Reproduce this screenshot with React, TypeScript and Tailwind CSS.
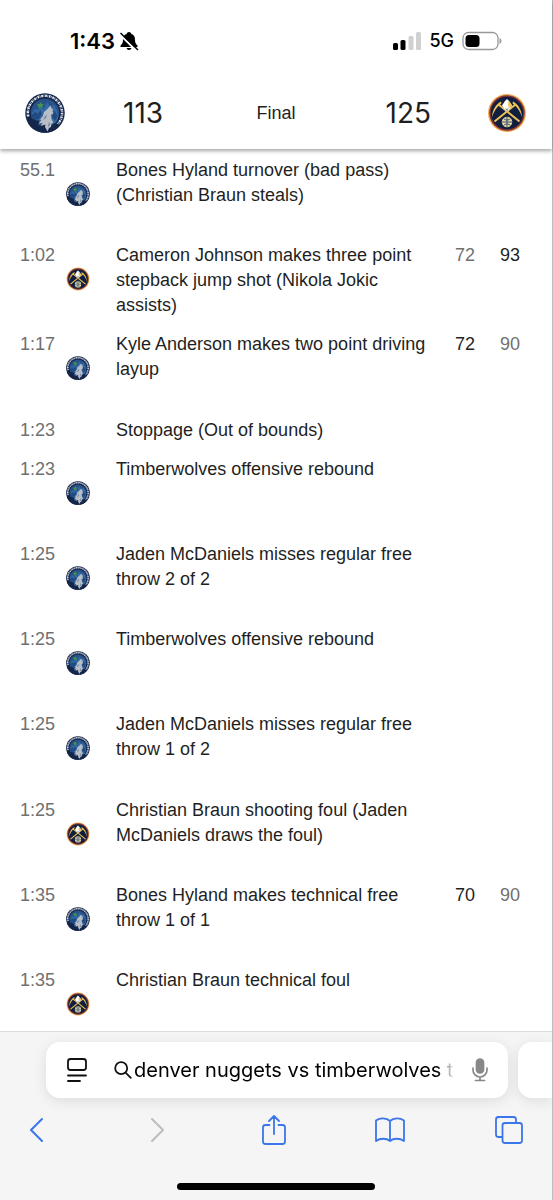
type Team = 'min' | 'den';

type Play = {
  time: string;
  text: string;
  team?: Team;
  score?: [number, number];
};

const plays: Play[] = [
  { time: '55.1', team: 'min', text: 'Bones Hyland turnover (bad pass) (Christian Braun steals)' },
  { time: '1:02', team: 'den', text: 'Cameron Johnson makes three point stepback jump shot (Nikola Jokic assists)', score: [72, 93] },
  { time: '1:17', team: 'min', text: 'Kyle Anderson makes two point driving layup', score: [72, 90] },
  { time: '1:23', text: 'Stoppage (Out of bounds)' },
  { time: '1:23', team: 'min', text: 'Timberwolves offensive rebound' },
  { time: '1:25', team: 'min', text: 'Jaden McDaniels misses regular free throw 2 of 2' },
  { time: '1:25', team: 'min', text: 'Timberwolves offensive rebound' },
  { time: '1:25', team: 'min', text: 'Jaden McDaniels misses regular free throw 1 of 2' },
  { time: '1:25', team: 'den', text: 'Christian Braun shooting foul (Jaden McDaniels draws the foul)' },
  { time: '1:35', team: 'min', text: 'Bones Hyland makes technical free throw 1 of 1', score: [70, 90] },
  { time: '1:35', team: 'den', text: 'Christian Braun technical foul' },
];

const WolvesLogo = ({ className }: { className: string }) => (
  <svg viewBox="0 0 80 80" className={className} role="img" aria-label="Minnesota Timberwolves">
    <circle cx="40" cy="40" r="39.500" fill="#14264a" />
    {/* lettering band, read as ticks at this size */}
    <path d="M6.500 47A34.200 34.200 0 1 1 64 64" fill="none" stroke="#dfe3ea" strokeWidth="5" strokeDasharray="3.400 1.200 1.400 1.600" />
    <circle cx="40" cy="40" r="28.500" fill="#28538a" />
    <path d="M14 40l7-9 4 4 7-10 5 8 7-15 7 10 7-5 6 12 2 14-4 10H16z" fill="#336aa6" />
    <path d="M13 44l8-7 4 5 6-8 3 8-6 10-13 3zM58 34l7 12-5 10-6-8z" fill="#234a80" />
    <path d="M3 49c10-1 14 7 26 6l-3 10 14-1 6 15C24 82 5 69 3 49z" fill="#14264a" />
    <path d="M46 79l8-14 8-5 8 4c-6 9-14 14-24 15z" fill="#14264a" />
    <path d="M51 25l2 6 3 1-1 5 2 3-5 4 1 8 4 8-4 1-1 7-4 2-3 7-5-9 1-5-10 3 4-6-8 1 6-7-3-1 6-7 2-8 7-6z" fill="#b9bdc5" />
    <path d="M40 47l4-4-2 7-6 4zM48 57l2 7-4 4z" fill="#6d7f9b" />
    <path d="M31 18l2 4 5 0-4 4 2 4-5-2-5 3 1-5-4-3 6-1z" fill="#479448" />
  </svg>
);

const NuggetsLogo = ({ className }: { className: string }) => (
  <svg viewBox="0 0 80 80" className={className} role="img" aria-label="Denver Nuggets">
    <circle cx="40" cy="40" r="38" fill="#f0b04c" />
    <circle cx="40" cy="40" r="35.500" fill="#84323a" />
    <circle cx="40" cy="40" r="32.500" fill="#101f40" />
    <path d="M23 23L65 57M57 23L15 57" fill="none" stroke="#eec052" strokeWidth="4" />
    <path d="M28 17C18 22 11 33 10 48c4-11 8-17 14-23l5-4zM52 17c10 5 17 16 18 31-4-11-8-17-14-23l-5-4z" fill="#eec052" />
    <path d="M40 12l4 4 6 9-4 6-6 6-6-6-4-6 6-9z" fill="#fff" />
    <path d="M43 15l4 5 3 5-5 6-3-6z" fill="#f0c658" />
    <path d="M36 30l4 2 4-2-4 7z" fill="#6f93c4" />
    <circle cx="40" cy="58" r="10.500" fill="#e8d59c" />
    <path d="M30 58h20M40 48v20M33 51c4 4 10 4 14 0M33 65c4-4 10-4 14 0" fill="none" stroke="#38547f" strokeWidth="2" />
  </svg>
);

const TeamLogo = ({ team, className }: { team: Team; className: string }) =>
  team === 'min' ? <WolvesLogo className={className} /> : <NuggetsLogo className={className} />;

const StatusBar = () => (
  <div className="flex h-[76px] items-center justify-between pl-[70px] pr-[50px] pt-1.5">
    <div className="flex items-center gap-1">
      <span className="text-[22px] leading-7 font-semibold text-black">1:43</span>
      <svg viewBox="0 0 20 20" className="size-5" aria-label="Silent mode">
        <path d="M10 1c-1.200 0-2 .8-2.200 1.800C5 3.800 4 6 4 9c0 3-1 4-2.500 5.500V16h17v-1.500C17 13 16 12 16 9c0-3-1-5.200-3.800-6.200C12 1.800 11.200 1 10 1zM7.500 17c.4 1.200 1.300 2 2.500 2s2.100-.8 2.500-2z" />
        <path d="M0 2.500L17.500 20" stroke="#fff" strokeWidth="2" />
        <path d="M1.500 2L19 19" stroke="#000" strokeWidth="1.500" />
      </svg>
    </div>
    <div className="flex items-center gap-2">
      <svg viewBox="0 0 28 18" className="h-[18px] w-7" aria-label="Signal">
        <rect x="0" y="11" width="5" height="7" rx="1.500" />
        <rect x="7.500" y="8" width="5" height="10" rx="1.500" />
        <rect x="15.500" y="4" width="5" height="14" rx="1.500" fill="#d0d0d0" />
        <rect x="23" y="0" width="5" height="18" rx="1.500" fill="#d0d0d0" />
      </svg>
      <span className="text-lg leading-7 font-medium text-black">5G</span>
      <svg viewBox="0 0 40 20" className="h-5 w-10" aria-label="Battery">
        <rect x="1" y="1.500" width="35" height="17" rx="5.500" fill="none" stroke="#999" strokeWidth="1.300" />
        <rect x="3.500" y="4" width="14" height="12" rx="3.500" />
        <path d="M37.500 7c2.600 1 2.600 5 0 6z" fill="#999" />
      </svg>
    </div>
  </div>
);

const ScoreHeader = () => (
  <header className="relative bg-white shadow-[0_2px_4px_rgba(0,0,0,0.35)]">
    <StatusBar />
    <div className="grid h-[73px] grid-cols-[1fr_auto_1fr] items-center px-[25px] text-[#1f1f1f]">
      <div className="flex items-center gap-[58px]">
        <TeamLogo team="min" className="size-10" />
        <span className="text-[28px] leading-8">113</span>
      </div>
      <span className="font-['Liberation_Sans',sans-serif] text-lg leading-6">Final</span>
      <div className="flex items-center justify-end gap-14">
        <span className="text-[28px] leading-8">125</span>
        <TeamLogo team="den" className="size-10" />
      </div>
    </div>
  </header>
);

const PlayRow = ({ play }: { play: Play }) => {
  const [away, home] = play.score ?? [];
  const awayScored = play.team === 'min';
  return (
    <li
      className={`grid grid-cols-[46px_50px_1fr_80px] py-[7px] text-lg leading-[25px] ${play.team ? 'min-h-[85px] last:min-h-[70px]' : ''}`}
    >
      <time className="text-[#707070]">{play.time}</time>
      <div className="pt-6">{play.team && <TeamLogo team={play.team} className="size-6" />}</div>
      <p>{play.text}</p>
      {play.score && (
        <div className="flex justify-end gap-[25px]">
          <span className={awayScored ? '' : 'text-[#707070]'}>{away}</span>
          <span className={awayScored ? 'text-[#707070]' : ''}>{home}</span>
        </div>
      )}
    </li>
  );
};

const SafariBar = () => (
  <footer className="overflow-hidden border-t border-[#dcdcdc] bg-[#f5f5f5]">
    <div className="flex gap-2.5 pt-2.5 pl-[46px]">
      <form className="flex h-14 min-w-0 flex-1 items-center rounded-[14px] bg-white pr-[18px] pl-5 shadow-[0_3px_14px_rgba(0,0,0,0.1)]">
        <button type="button" aria-label="Page menu" className="mr-[26px] shrink-0">
          <svg viewBox="0 0 22 26" className="h-[26px] w-[22px]" fill="none" stroke="#111" strokeWidth="1.800" strokeLinecap="round">
            <rect x="2" y="2" width="18" height="11" rx="2.500" />
            <path d="M2 18.500h18M2 24h12" />
          </svg>
        </button>
        <svg viewBox="0 0 18 18" className="mr-0.5 size-[18px] shrink-0" fill="none" stroke="#111" strokeWidth="1.800" strokeLinecap="round" aria-hidden="true">
          <circle cx="7.200" cy="7.200" r="6" />
          <path d="M11.800 11.800L16.800 16.800" />
        </svg>
        <input
          type="text"
          aria-label="Search or enter website name"
          defaultValue="denver nuggets vs timberwolves t"
          className="min-w-0 flex-1 bg-transparent text-xl leading-7 text-black outline-none mask-[linear-gradient(to_right,black_calc(100%-16px),transparent)]"
        />
        <button type="button" aria-label="Dictate" className="ml-4 shrink-0">
          <svg viewBox="0 0 20 26" className="h-[26px] w-5" fill="none" stroke="#88888a" strokeWidth="1.700" strokeLinecap="round">
            <rect x="6.500" y="2" width="7" height="14" rx="3.500" fill="#88888a" />
            <path d="M3 11v2a7 7 0 0 0 14 0v-2M10 20v3.500M5.500 23.500h9" />
          </svg>
        </button>
      </form>
      <div className="h-14 w-[34px] rounded-l-[14px] bg-white shadow-[0_3px_14px_rgba(0,0,0,0.1)]" />
    </div>
    <nav aria-label="Browser" className="flex h-16 items-center justify-between pr-7 pl-[29px] text-[#3b76ea]">
      <button type="button" aria-label="Back" className="w-7">
        <svg viewBox="0 0 16 26" className="h-[26px] w-4" fill="none" stroke="currentColor" strokeWidth="2" strokeLinecap="round" strokeLinejoin="round">
          <path d="M13 2L2 13l11 11" />
        </svg>
      </button>
      <button type="button" aria-label="Forward" className="w-7 pl-1 text-[#bdbdbd]" disabled>
        <svg viewBox="0 0 16 26" className="h-[26px] w-4" fill="none" stroke="currentColor" strokeWidth="2" strokeLinecap="round" strokeLinejoin="round">
          <path d="M3 2l11 11L3 24" />
        </svg>
      </button>
      <button type="button" aria-label="Share">
        <svg viewBox="0 0 26 32" className="h-8 w-[26px]" fill="none" stroke="currentColor" strokeWidth="1.800" strokeLinecap="round" strokeLinejoin="round">
          <path d="M8.500 11H4.500a2.500 2.500 0 0 0-2.500 2.500v14A2.500 2.500 0 0 0 4.500 30h17a2.500 2.500 0 0 0 2.500-2.500v-14a2.500 2.500 0 0 0-2.500-2.500h-4M13 20V2M8 7l5-5 5 5" />
        </svg>
      </button>
      <button type="button" aria-label="Bookmarks">
        <svg viewBox="0 0 32 28" className="h-7 w-8" fill="none" stroke="currentColor" strokeWidth="1.800" strokeLinejoin="round">
          <path d="M16 5C12.500 1.500 6 1.500 2 4.500V25c4-3 10.500-3 14 0 3.500-3 10-3 14 0V4.500C26 1.500 19.500 1.500 16 5zV25" />
        </svg>
      </button>
      <button type="button" aria-label="Tabs">
        <svg viewBox="0 0 30 30" className="size-[30px]" fill="none" stroke="currentColor" strokeWidth="1.800" strokeLinejoin="round">
          <path d="M8.500 22H4.500A2.500 2.500 0 0 1 2 19.500v-15A2.500 2.500 0 0 1 4.500 2h15A2.500 2.500 0 0 1 22 4.500V8" />
          <rect x="8.500" y="8" width="19.500" height="20" rx="2.500" />
        </svg>
      </button>
    </nav>
    <div className="flex justify-center pt-[21px] pb-2.5">
      <div className="h-[7px] w-[198px] rounded-full bg-black" />
    </div>
  </footer>
);

export default function App() {
  return (
    <div className="flex min-h-screen flex-col border-r border-[#bdbdbd] bg-white font-[Inter,sans-serif]">
      <ScoreHeader />
      <main className="flex flex-1 flex-col">
        <ol className="flex flex-1 flex-col justify-between pt-0.5 pr-8 pl-5 font-['Liberation_Sans',sans-serif] text-[#1f1f1f]">
          {plays.map((play, i) => (
            <PlayRow key={i} play={play} />
          ))}
        </ol>
      </main>
      <SafariBar />
    </div>
  );
}
